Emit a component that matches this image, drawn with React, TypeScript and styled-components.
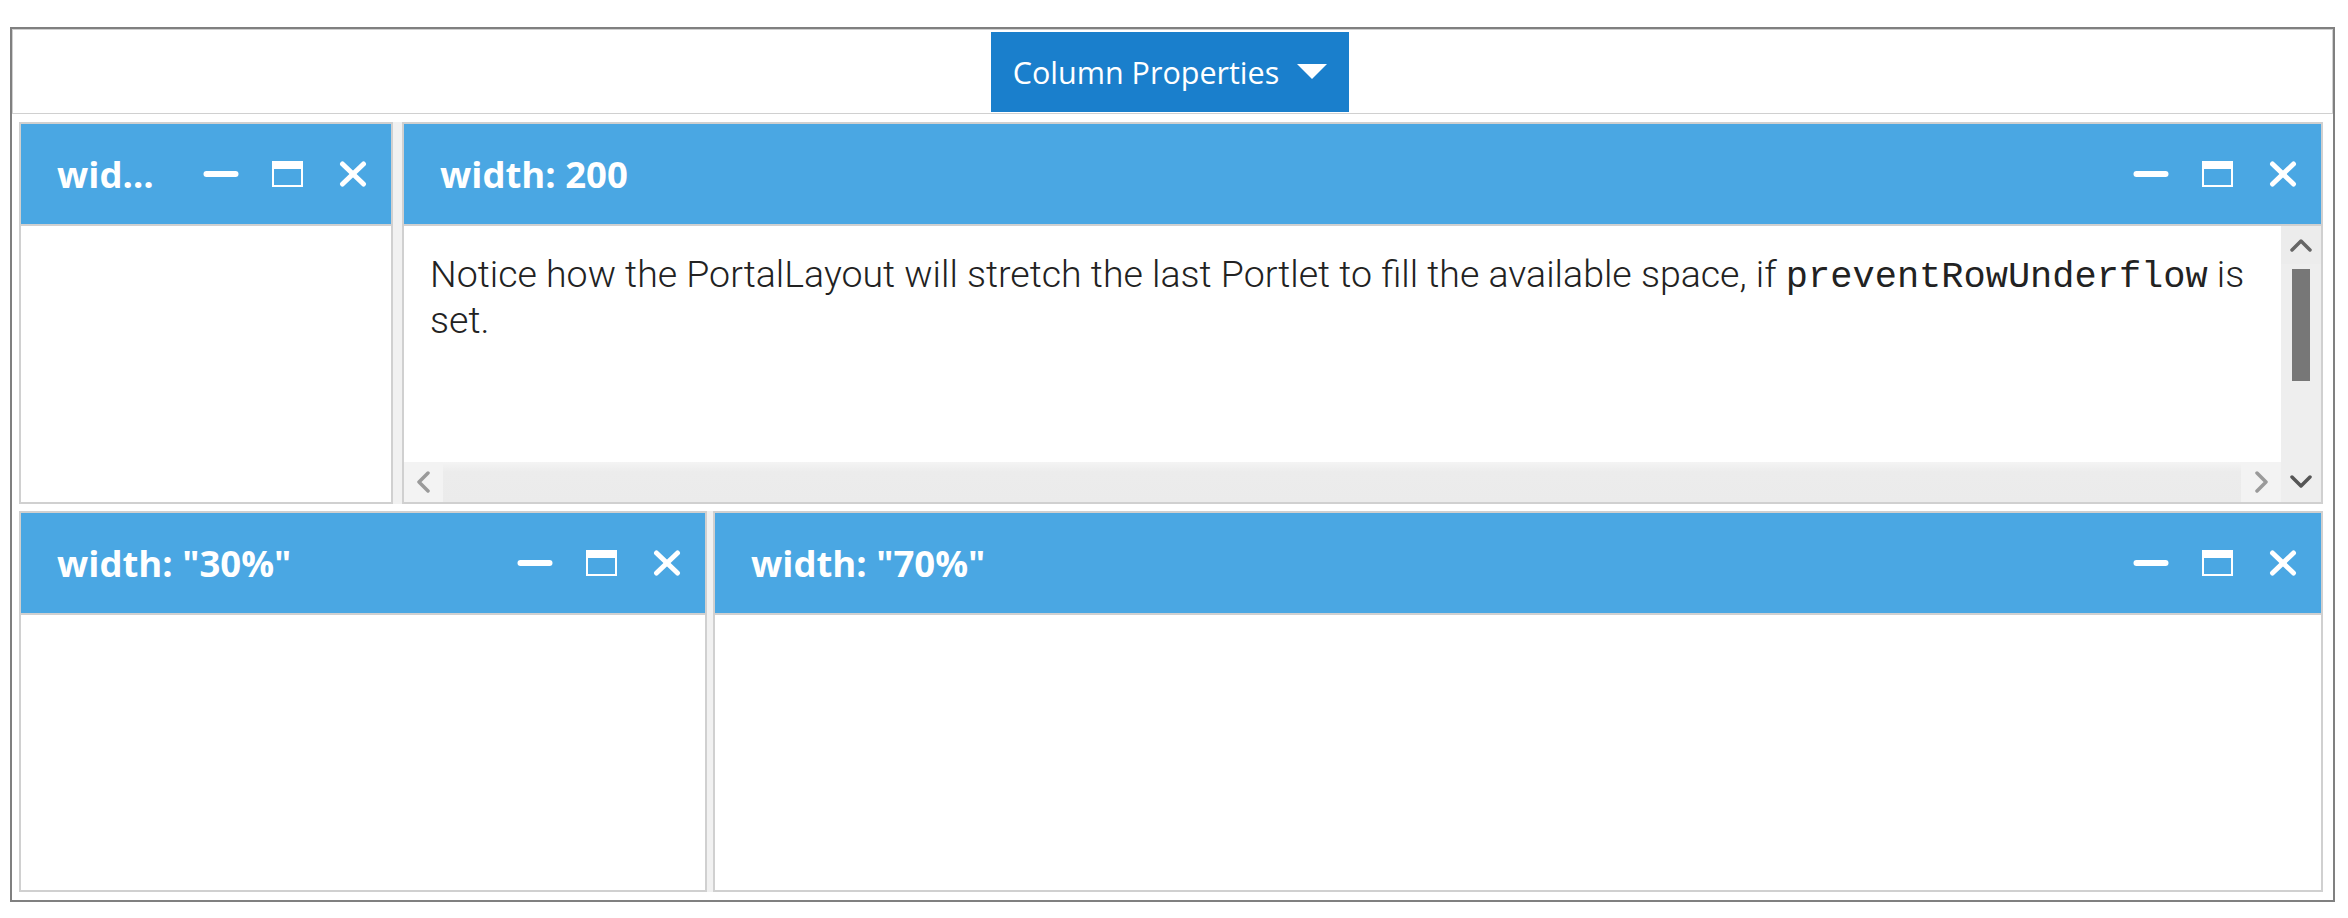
import React from "react";
import styled, { createGlobalStyle } from "styled-components";

const GlobalStyle = createGlobalStyle`
  html, body {
    margin: 0;
    padding: 0;
    background: #ffffff;
    font-family: "Open Sans", "Liberation Sans", sans-serif;
  }
  * { box-sizing: border-box; }
`;

const Frame = styled.div`
  margin: 27px 13px 0 10px;
  height: 875px;
  border: 2px solid #808080;
  display: flex;
  flex-direction: column;
  background: #ffffff;
`;

const Toolbar = styled.div`
  height: 85px;
  border: 1px solid #d0d0d0;
  display: flex;
  align-items: center;
  justify-content: center;
  flex: none;
`;

const MenuButton = styled.button`
  height: 80px;
  width: 358px;
  margin-right: 5px;
  border: none;
  background: #1a7fcc;
  color: #ffffff;
  font-family: "Open Sans", "Liberation Sans", sans-serif;
  font-size: 30.5px;
  font-weight: 400;
  display: flex;
  align-items: center;
  justify-content: center;
  gap: 18px;
  padding: 0;
  cursor: pointer;
`;

const PortalArea = styled.div`
  flex: 1;
  min-height: 0;
  display: flex;
  flex-direction: column;
  gap: 7px;
  padding: 8px 10px 8px 7px;
`;

const Row = styled.div`
  flex: 1;
  min-height: 0;
  display: flex;
`;

const Resizer = styled.div<{ $w: number }>`
  width: ${(p) => p.$w}px;
  flex: none;
  background: #f1f1f1;
`;

const PortletBox = styled.div<{ $w?: number }>`
  ${(p) => (p.$w ? `width: ${p.$w}px; flex: none;` : `flex: 1;`)}
  min-width: 0;
  border: 2px solid #d0d0d0;
  display: flex;
  flex-direction: column;
  background: #ffffff;
`;

const Header = styled.div`
  height: 102px;
  flex: none;
  background: #4aa7e3;
  border-bottom: 2px solid #d0d0d0;
  display: flex;
  align-items: center;
  padding: 0 16px 0 36px;
`;

const Title = styled.div`
  flex: 1;
  min-width: 0;
  margin-right: 36px;
  color: #ffffff;
  font-family: "Open Sans", "Liberation Sans", sans-serif;
  font-weight: 700;
  font-size: 36.5px;
  white-space: nowrap;
  overflow: hidden;
  text-overflow: ellipsis;
`;

const Controls = styled.div`
  display: flex;
  gap: 22px;
  flex: none;
`;

const ControlButton = styled.div`
  width: 44px;
  height: 44px;
  display: flex;
  align-items: center;
  justify-content: center;
`;

const Body = styled.div`
  flex: 1;
  min-height: 0;
  background: #ffffff;
`;

const ScrollBody = styled.div`
  flex: 1;
  min-height: 0;
  display: grid;
  grid-template-columns: 1fr 40px;
  grid-template-rows: 1fr 40px;
`;

const Content = styled.div`
  grid-column: 1;
  grid-row: 1;
  overflow: hidden;
  padding: 25px 0 0 26px;
  font-family: Roboto, "Liberation Sans", sans-serif;
  font-weight: 300;
  font-size: 37.5px;
  line-height: 46px;
  color: #222222;
`;

const Code = styled.code`
  font-family: "Liberation Mono", "Courier New", monospace;
  font-size: 37px;
  line-height: 1;
  color: #222222;
`;

const VScroll = styled.div`
  grid-column: 2;
  grid-row: 1 / span 2;
  display: flex;
  flex-direction: column;
  background: #eeeeee;
`;

const ArrowButton = styled.div<{ $h: number; $bg: string }>`
  height: ${(p) => p.$h}px;
  flex: none;
  display: flex;
  align-items: center;
  justify-content: center;
  background: ${(p) => p.$bg};
`;

const VTrack = styled.div`
  flex: 1;
  display: flex;
  justify-content: center;
  padding-top: 5px;
`;

const VThumb = styled.div`
  width: 18px;
  height: 112px;
  background: #777777;
`;

const HScroll = styled.div`
  grid-column: 1;
  grid-row: 2;
  display: flex;
  background: #f3f3f3;
`;

const HButton = styled.div<{ $w: number }>`
  width: ${(p) => p.$w}px;
  flex: none;
  display: flex;
  align-items: center;
  justify-content: center;
  background: #f3f3f3;
`;

const HThumb = styled.div`
  flex: 1;
  background: linear-gradient(#f4f4f4 0px, #ececec 10px, #ebebeb 100%);
`;

const MinimizeIcon = () => (
  <svg width="36" height="8" viewBox="0 0 36 8">
    <line x1="3.5" y1="4" x2="32.5" y2="4" stroke="#fff" strokeWidth="6" strokeLinecap="round" />
  </svg>
);

const MaximizeIcon = () => (
  <svg width="31" height="26" viewBox="0 0 31 26">
    <rect x="1" y="1" width="29" height="24" fill="none" stroke="#fff" strokeWidth="2" />
    <rect x="0" y="0" width="31" height="8" fill="#fff" />
  </svg>
);

const CloseIcon = () => (
  <svg width="28" height="26" viewBox="0 0 28 26">
    <line x1="3.5" y1="3" x2="24.5" y2="23" stroke="#fff" strokeWidth="5" strokeLinecap="round" />
    <line x1="24.5" y1="3" x2="3.5" y2="23" stroke="#fff" strokeWidth="5" strokeLinecap="round" />
  </svg>
);

const Chevron = ({ dir, color }: { dir: "up" | "down" | "left" | "right"; color: string }) => {
  const pts: Record<string, string> = {
    up: "2,12 11,3 20,12",
    down: "2,2 11,11 20,2",
    left: "12,2 3,11 12,20",
    right: "3,2 12,11 3,20",
  };
  const horiz = dir === "up" || dir === "down";
  return (
    <svg width={horiz ? 22 : 15} height={horiz ? 14 : 22} viewBox={horiz ? "0 0 22 14" : "0 0 15 22"}>
      <polyline points={pts[dir]} fill="none" stroke={color} strokeWidth="3.5" strokeLinejoin="round" strokeLinecap="round" />
    </svg>
  );
};

const TriangleDown = () => (
  <svg width="30" height="16" viewBox="0 0 30 16">
    <polygon points="0,0 30,0 15,15" fill="#fff" />
  </svg>
);

const Portlet = ({ title, width, children }: { title: string; width?: number; children?: React.ReactNode }) => (
  <PortletBox $w={width}>
    <Header>
      <Title>{title}</Title>
      <Controls>
        <ControlButton><MinimizeIcon /></ControlButton>
        <ControlButton><MaximizeIcon /></ControlButton>
        <ControlButton><CloseIcon /></ControlButton>
      </Controls>
    </Header>
    {children ?? <Body />}
  </PortletBox>
);

export default function App() {
  return (
    <>
      <GlobalStyle />
      <Frame>
        <Toolbar>
          <MenuButton>
            <span>Column Properties</span>
            <TriangleDown />
          </MenuButton>
        </Toolbar>
        <PortalArea>
          <Row>
            <Portlet title="width: 100" width={374} />
            <Resizer $w={9} />
            <Portlet title="width: 200">
              <ScrollBody>
                <Content>
                  Notice how the PortalLayout will stretch the last Portlet to fill the available space, if{" "}
                  <Code>preventRowUnderflow</Code> is set.
                </Content>
                <HScroll>
                  <HButton $w={39}><Chevron dir="left" color="#9a9a9a" /></HButton>
                  <HThumb />
                  <HButton $w={40}><Chevron dir="right" color="#9a9a9a" /></HButton>
                </HScroll>
                <VScroll>
                  <ArrowButton $h={38} $bg="#ececec"><Chevron dir="up" color="#666666" /></ArrowButton>
                  <VTrack><VThumb /></VTrack>
                  <ArrowButton $h={40} $bg="#eeeeee"><Chevron dir="down" color="#555555" /></ArrowButton>
                </VScroll>
              </ScrollBody>
            </Portlet>
          </Row>
          <Row>
            <Portlet title={'width: "30%"'} width={688} />
            <Resizer $w={6} />
            <Portlet title={'width: "70%"'} />
          </Row>
        </PortalArea>
      </Frame>
    </>
  );
}
